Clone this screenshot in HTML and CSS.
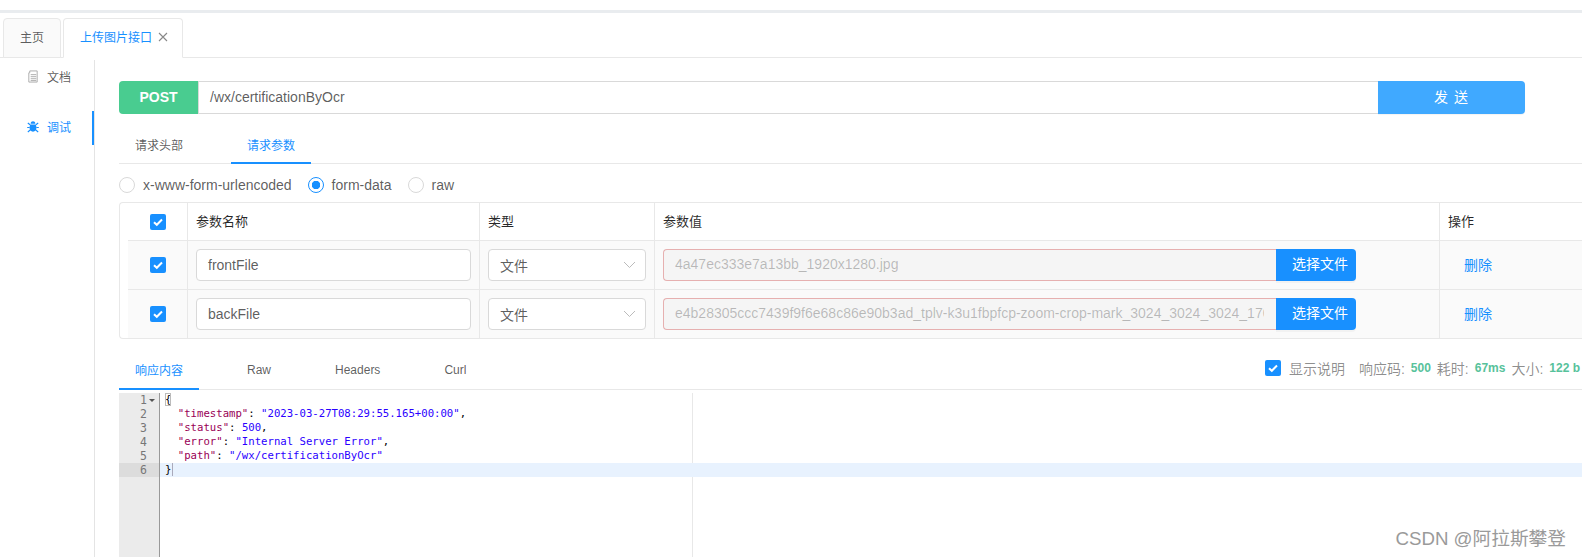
FILE: index.html
```html
<!DOCTYPE html>
<html lang="zh">
<head>
<meta charset="utf-8">
<title>上传图片接口</title>
<link rel="stylesheet" href="styles.css">
</head>
<body>
<div class="topband"></div>
<nav class="pagetabs">
  <div class="pagetab">主页</div>
  <div class="pagetab active">上传图片接口
    <svg class="close" viewBox="0 0 10 10"><path d="M1 1l8 8M9 1l-8 8"/></svg>
  </div>
</nav>
<main class="main">
  <aside class="side">
    <div class="sideitem">
      <svg class="sideicon" viewBox="0 0 12 14"><path class="docline" d="M2.5 3V1h8v12h-9V3zM3.5 5h6M3.5 7.2h6M3.5 9.400h6M3.500 11.400h6"/></svg>
      <span>文档</span>
    </div>
    <div class="sideitem current">
      <svg class="sideicon" viewBox="0 0 12 12"><path class="bugfill" d="M3.6 3.2C3.8 1.6 4.8.8 6 .8s2.2.8 2.4 2.4zM3.2 4h5.6c.5.9.6 2.2.6 3.600 0 2.200-1.300 3.600-3.400 3.600S2.600 9.800 2.600 7.600c0-1.400.1-2.700.6-3.600z"/><path class="buglegs" d="M.8 2.500l2.300 1.800M11.200 2.500L8.900 4.300M.2 7h2.500M11.800 7H9.300M.8 11.500l2.400-2M11.200 11.500l-2.400-2"/></svg>
      <span>调试</span>
    </div>
  </aside>
  <section class="content">
    <div class="urlbar">
      <div class="method">POST</div>
      <div class="url">/wx/certificationByOcr</div>
      <div class="send">发 送</div>
    </div>
    <div class="reqtabs">
      <div class="reqtab">请求头部</div>
      <div class="reqtab on">请求参数</div>
    </div>
    <div class="radios">
      <span class="radio"></span><span class="radiolabel">x-www-form-urlencoded</span>
      <span class="radio checked"></span><span class="radiolabel">form-data</span>
      <span class="radio"></span><span class="radiolabel">raw</span>
    </div>
    <div class="table">
      <div class="row head">
        <div class="cell center"><span class="check"><svg viewBox="0 0 16 16"><path d="M4 8.200l2.800 2.600L12 5.500"/></svg></span></div>
        <div class="cell">参数名称</div>
        <div class="cell">类型</div>
        <div class="cell">参数值</div>
        <div class="cell last">操作</div>
      </div>
      <div class="row">
        <div class="cell center"><span class="check"><svg viewBox="0 0 16 16"><path d="M4 8.200l2.800 2.600L12 5.500"/></svg></span></div>
        <div class="cell"><div class="field">frontFile</div></div>
        <div class="cell"><div class="select">文件<svg class="chev" viewBox="0 0 13 8"><path d="M1 1l5.500 5.500L12 1"/></svg></div></div>
        <div class="cell"><div class="filegroup"><div class="filename"><div class="fileclip">4a47ec333e7a13bb_1920x1280.jpg</div></div><div class="pick">选择文件</div></div></div>
        <div class="cell last"><span class="del">删除</span></div>
      </div>
      <div class="row final">
        <div class="cell center"><span class="check"><svg viewBox="0 0 16 16"><path d="M4 8.200l2.800 2.600L12 5.500"/></svg></span></div>
        <div class="cell"><div class="field">backFile</div></div>
        <div class="cell"><div class="select">文件<svg class="chev" viewBox="0 0 13 8"><path d="M1 1l5.500 5.500L12 1"/></svg></div></div>
        <div class="cell"><div class="filegroup"><div class="filename"><div class="fileclip">e4b28305ccc7439f9f6e68c86e90b3ad_tplv-k3u1fbpfcp-zoom-crop-mark_3024_3024_3024_1702.jpg</div></div><div class="pick">选择文件</div></div></div>
        <div class="cell last"><span class="del">删除</span></div>
      </div>
    </div>
    <div class="resbar">
      <div class="restab on">响应内容</div>
      <div class="restab">Raw</div>
      <div class="restab">Headers</div>
      <div class="restab">Curl</div>
      <div class="status">
        <span class="check"><svg viewBox="0 0 16 16"><path d="M4 8.200l2.800 2.600L12 5.500"/></svg></span>
        <span class="showdesc">显示说明</span>
        <span class="stat">响应码:</span><b class="num">500</b>
        <span class="stat">耗时:</span><b class="num">67ms</b>
        <span class="stat">大小:</span><b class="num">122 b</b>
      </div>
    </div>
    <div class="editor">
      <div class="gutter">
        <div class="ln">1<i class="fold"></i></div>
        <div class="ln">2</div>
        <div class="ln">3</div>
        <div class="ln">4</div>
        <div class="ln">5</div>
        <div class="ln cur">6</div>
      </div>
      <div class="code">
        <div class="margin"></div>
        <div class="cl"><span class="bracket">{</span></div>
        <div class="cl">  <span class="k">"timestamp"</span>: <span class="s">"2023-03-27T08:29:55.165+00:00"</span>,</div>
        <div class="cl">  <span class="k">"status"</span>: <span class="n">500</span>,</div>
        <div class="cl">  <span class="k">"error"</span>: <span class="s">"Internal Server Error"</span>,</div>
        <div class="cl">  <span class="k">"path"</span>: <span class="s">"/wx/certificationByOcr"</span></div>
        <div class="cl cur"><span class="bracket2">}</span></div>
      </div>
    </div>
  </section>
</main>
<div class="watermark">CSDN @阿拉斯攀登</div>
</body>
</html>
```
FILE: styles.css
```css
* { box-sizing: border-box; }
html, body { margin: 0; height: 557px; overflow: hidden; background: #fff; }
body {
  position: relative;
  font-family: "Liberation Sans", "Noto Sans CJK SC", sans-serif;
  font-size: 14px;
  color: rgba(0, 0, 0, .65);
}
.topband { height: 13px; border-bottom: 3px solid #e9ecef; }

.pagetabs {
  display: flex;
  gap: 2px;
  height: 45px;
  padding: 5px 0 0 3px;
  border-bottom: 1px solid #e8e8e8;
}
.pagetab {
  display: flex;
  align-items: center;
  height: 40px;
  padding: 0 16px 3px;
  font-size: 12px;
  background: #fafafa;
  border: 1px solid #e8e8e8;
  border-radius: 4px 4px 0 0;
}
.pagetab.active {
  background: #fff;
  color: #1890ff;
  border-bottom-color: #fff;
  padding-right: 14px;
}
.close { width: 10px; height: 10px; margin-left: 6px; fill: none; stroke: #888; stroke-width: 1.100; }

.main { display: flex; height: 499px; }
.side {
  width: 95px;
  flex: none;
  margin-top: 2px;
  padding-top: 1px;
  border-right: 1px solid #e4e4e4;
  display: flex;
  flex-direction: column;
  gap: 16px;
}
.sideitem {
  display: flex;
  align-items: center;
  height: 34px;
  padding: 0 0 3px 27px;
  font-size: 12px;
  gap: 8px;
  border-right: 2px solid transparent;
}
.sideitem.current { color: #1890ff; border-right-color: #1890ff; }
.sideicon { width: 12px; height: 13px; flex: none; }
.docline { fill: none; stroke: #aaa; stroke-width: 1; }
.bugfill { fill: #1890ff; }
.buglegs { fill: none; stroke: #1890ff; stroke-width: 1.100; }

.content { flex: 1; min-width: 0; padding: 23px 0 0 24px; }
.urlbar { display: flex; width: 1406px; height: 33px; }
.method {
  width: 79px;
  display: flex;
  align-items: center;
  justify-content: center;
  padding-bottom: 1px;
  background: #49cc90;
  color: #fff;
  font-weight: 700;
  font-size: 14px;
  border-radius: 4px 0 0 4px;
}
.url {
  flex: 1;
  display: flex;
  align-items: center;
  padding: 0 0 2px 11px;
  font-size: 14px;
  border: 1px solid #d9d9d9;
  border-width: 1px 0 1px 1px;
}
.send {
  width: 147px;
  display: flex;
  align-items: center;
  justify-content: center;
  padding-bottom: 3px;
  background: #40a9ff;
  color: #fff;
  border-radius: 0 4px 4px 0;
  box-shadow: 0 1px 1px rgba(0, 0, 0, .05);
  letter-spacing: 1px;
}

.reqtabs {
  display: flex;
  gap: 32px;
  height: 50px;
  padding-top: 16px;
  border-bottom: 1px solid #e8e8e8;
}
.reqtab {
  width: 80px;
  height: 34px;
  padding: 6px 0 0;
  font-size: 12px;
  text-align: center;
}
.reqtab.on { color: #1890ff; border-bottom: 2px solid #1890ff; }

.radios { display: flex; align-items: center; height: 38px; padding-top: 3px; }
.radio {
  width: 16px;
  height: 16px;
  flex: none;
  border: 1px solid #d9d9d9;
  border-radius: 50%;
  background: #fff;
}
.radio.checked {
  border-color: #1890ff;
  background: radial-gradient(circle, #1890ff 0 4px, #fff 4.500px);
}
.radiolabel { margin: 0 16px 0 8px; font-size: 14px; }

.table {
  width: 1470px;
  border: 1px solid #e8e8e8;
  border-right: 0;
  border-radius: 4px 0 0 4px;
}
.row {
  display: grid;
  grid-template-columns: 60px 292px 175px 785px 1fr;
  margin-left: 8px;
  height: 49px;
  background: #fafafa;
  border-bottom: 1px solid #e8e8e8;
}
.row.head { height: 38px; background: #fff; }
.row.final { height: 48px; border-bottom: 0; }
.cell {
  display: flex;
  align-items: center;
  padding: 0 8px;
  border-right: 1px solid #e8e8e8;
  font-size: 13px;
}
.head .cell { color: rgba(0, 0, 0, .85); font-size: 13px; padding-bottom: 2px; }
.head .cell.center { padding-bottom: 0; }
.cell.center { justify-content: center; padding: 0; }
.cell.last { border-right: 0; }
.check {
  display: block;
  width: 16px;
  height: 16px;
  flex: none;
  background: #1890ff;
  border-radius: 2px;
}
.check svg { display: block; fill: none; stroke: #fff; stroke-width: 2; }
.field {
  width: 100%;
  height: 32px;
  display: flex;
  align-items: center;
  padding: 0 11px;
  background: #fff;
  border: 1px solid #d9d9d9;
  border-radius: 4px;
  font-size: 14px;
}
.select {
  width: 100%;
  height: 32px;
  display: flex;
  align-items: center;
  justify-content: space-between;
  padding: 0 9px 1px 11px;
  background: #fff;
  border: 1px solid #d9d9d9;
  border-radius: 4px;
  font-size: 14px;
}
.chev { width: 13px; height: 8px; fill: none; stroke: #bbb; stroke-width: 1; }
.filegroup { display: flex; width: 693px; height: 32px; }
.filename {
  width: 613px;
  padding: 0 12px 0 11px;
  background: #f5f5f5;
  border: 1px solid #e6b0b0;
  border-right: 0;
  border-radius: 4px 0 0 4px;
}
.fileclip {
  line-height: 29px;
  font-size: 14px;
  color: rgba(0, 0, 0, .25);
  white-space: nowrap;
  overflow: hidden;
}
.pick {
  width: 80px;
  padding-left: 16px;
  line-height: 30px;
  font-size: 14px;
  color: #fff;
  background: #1890ff;
  border-radius: 0 4px 4px 0;
  box-shadow: 0 2px 0 rgba(0, 0, 0, .03);
  white-space: nowrap;
}
.del { margin: 0 0 3px 16px; color: #1890ff; font-size: 14px; }

.resbar {
  display: flex;
  height: 50px;
  margin-top: 1px;
  border-bottom: 1px solid #e8e8e8;
  align-items: flex-end;
}
.restab {
  height: 35px;
  margin-right: 32px;
  padding: 9px 16px 0;
  font-size: 12px;
  text-align: center;
}
.restab.on {
  width: 80px;
  height: 36px;
  margin-bottom: -1px;
  padding-top: 7px;
  color: #1890ff;
  border-bottom: 2px solid #1890ff;
}
.status {
  display: flex;
  align-items: center;
  margin-left: auto;
  padding: 0 2px 11px 0;
  white-space: nowrap;
}
.showdesc { margin: 0 14px 0 8px; font-size: 14px; color: rgba(0, 0, 0, .45); }
.stat { font-size: 14px; color: rgba(0, 0, 0, .45); margin-right: 6px; }
.num { font-size: 12px; color: #57c29b; margin-right: 6px; }
.num:last-child { margin-right: 0; }

.editor {
  display: flex;
  margin-top: 3px;
  height: 170px;
  font-family: "DejaVu Sans Mono", monospace;
  font-size: 10.650px;
  line-height: 14px;
}
.gutter {
  width: 41px;
  flex: none;
  background: #ebebeb;
  border-right: 1px solid #999;
}
.ln { position: relative; height: 14px; padding-right: 12px; text-align: right; color: #777; font-size: 11.500px; }
.ln.cur { background: #dcdcdc; }
.fold {
  position: absolute;
  right: 4px;
  top: 6px;
  border: 3px solid transparent;
  border-top: 3px solid #555;
  border-bottom: 0;
}
.code { position: relative; flex: 1; color: #000; }
.margin { position: absolute; left: 532px; top: 0; bottom: 0; width: 1px; background: #e8e8e8; }
.cl { position: relative; height: 14px; padding-left: 5px; white-space: pre; }
.cl.cur { background: #e8f2fe; }
.k { color: #905; }
.s { color: #2a00ff; }
.n { color: #2a00ff; }
.bracket { outline: 1px solid #bbb; outline-offset: -1px; }
.bracket2 { border-right: 1px solid #aab; padding-right: 1px; }

.watermark {
  position: absolute;
  right: 16px;
  bottom: 7px;
  font-size: 18.700px;
  color: #9a9a9a;
  white-space: nowrap;
}
```
